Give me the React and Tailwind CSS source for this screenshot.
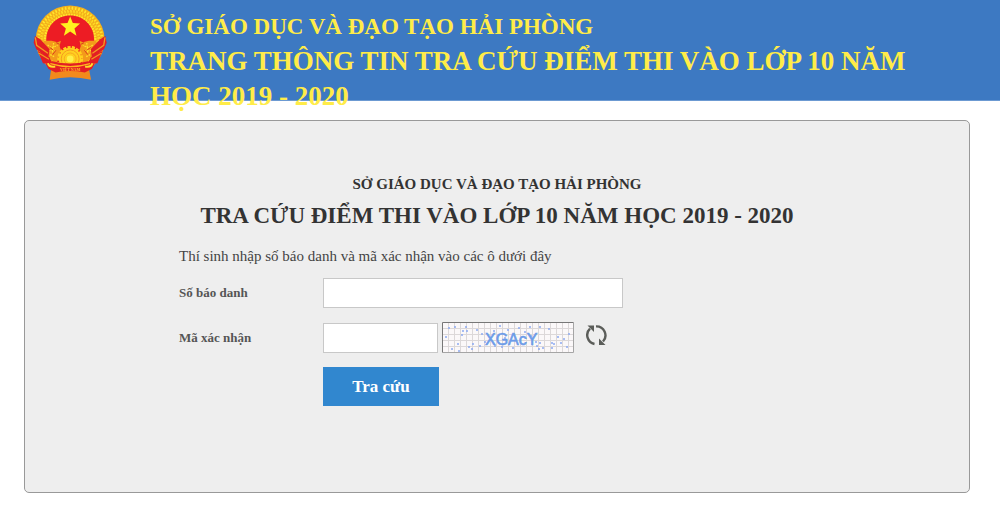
import { useState } from 'react';

const GRAIN_ANGLES = Array.from({ length: 43 }, (_, i) => -126 + i * 6);

const DOTS = [
  [4, 15], [10, 27], [13, 5], [16, 22], [21, 9], [24, 5], [25, 9], [20, 13], [27, 25],
  [31, 22], [30, 27], [38, 24], [40, 12], [43, 20], [52, 9], [58, 4], [60, 25],
  [66, 8], [71, 26], [77, 6], [83, 10], [88, 5], [89, 14], [94, 20], [98, 5], [97, 27],
  [101, 26], [95, 24], [98, 21], [107, 7], [110, 21], [112, 22], [116, 15], [119, 21],
  [122, 17], [127, 12], [125, 25], [110, 26], [63, 16], [35, 8], [7, 6], [17, 29], [53, 24],
];

const Emblem = () => (
  <svg viewBox="40 12 226 231" className="h-[77px] w-[75px]" aria-label="Quốc huy Việt Nam">
    {/* Wreath */}
    <circle cx="152" cy="120" r="104" fill="#f5b01c" />
    {GRAIN_ANGLES.map((angle) => (
      <g key={angle} transform={`rotate(${angle} 152 120)`}>
        <ellipse cx="149" cy="24" rx="3" ry="5" fill="#ffe52b" />
        <ellipse cx="154" cy="34" rx="3" ry="5" fill="#ffdb24" />
        <ellipse cx="149" cy="44" rx="3" ry="4" fill="#ffe52b" />
        <path d="M152 20v7M150 30l4 9" stroke="#e39a16" strokeWidth="1" />
      </g>
    ))}
    <path d="M152 46c-40 0-72 31-72 73 0 38 32 80 72 80s72-42 72-80c0-42-32-73-72-73z" fill="#ed1c24" />

    {/* Lower rice sheaves */}
    <path d="M74 122l22 0 18 5 10-5-4 16 4 12-6 22-14 30-28-12-16-28z" fill="#f39a1b" />
    <path d="M230 122l-22 0-18 5-10-5 4 16-4 12 6 22 14 30 28-12 16-28z" fill="#f39a1b" />
    <path
      d="M84 135l12 9 18-8M88 151l18 2M92 164l14 7M102 129l-3 29M84 172l14 12M220 135l-12 9-18-8M216 151l-18 2M212 164l-14 7M202 129l3 29M220 172l-14 12"
      fill="none"
      stroke="#ffe12a"
      strokeWidth="4"
      strokeDasharray="5 3"
    />
    <path d="M90 142l11 8M99 164l10-13M214 142l-11 8M205 164l-10-13M110 128l10 5M194 128l-10 5" stroke="#d8401c" strokeWidth="3" />

    {/* Side ribbons */}
    <path d="M46 108l16 10 28 30-4 26-36-26-8-20z" fill="#e31e24" />
    <path d="M258 108l-16 10-28 30 4 26 36-26 8-20z" fill="#e31e24" />
    <path d="M47 112l4 24 34 24M257 112l-4 24-34 24" fill="none" stroke="#f29a20" strokeWidth="4" />
    <path d="M54 152l36 20 10 22-30-4z" fill="#e31e24" />
    <path d="M250 152l-36 20-10 22 30-4z" fill="#e31e24" />
    <path d="M58 160l30 18M246 160l-30 18" stroke="#f29a20" strokeWidth="4" />

    {/* Cogwheel */}
    <circle cx="152" cy="177" r="35" fill="none" stroke="#ffcf1c" strokeWidth="8" strokeDasharray="9 4" />
    <circle cx="152" cy="177" r="34" fill="#ffd020" />
    <circle cx="152" cy="177" r="27" fill="none" stroke="#f49a1e" strokeWidth="3" />
    <circle cx="152" cy="177" r="18" fill="none" stroke="#f8a91e" strokeWidth="3" />
    <circle cx="152" cy="177" r="10" fill="#fff04a" />

    {/* Name ribbon */}
    <path d="M90 240l6-42h111l8 42q-63-16-125 0z" fill="#f28a1c" />
    <path d="M78 192l20-8q54 14 108 0l20 8-9 15-21 11q-44-9-88 0l-21-11z" fill="#e31e24" />
    <path d="M92 191q60 18 120 0" fill="none" stroke="#ffb51e" strokeWidth="4" />
    <path d="M85 190q3 13 22 10M219 190q-3 13-22 10" fill="none" stroke="#ffdd2a" strokeWidth="6" />
    <text x="152" y="213" textAnchor="middle" fontSize="12" fontWeight="700" fill="#ffc81e">
      VIỆT NAM
    </text>

    {/* Star */}
    <path d="M152 49l8 20 22 1-17 15 6 22-19-13-19 13 6-22-17-15 22-1z" fill="#fff01f" />
  </svg>
);

const CaptchaImage = () => (
  <svg viewBox="0 0 132 31" className="h-[31px] w-[132px]" aria-label="XGAcY">
    <rect width="132" height="31" fill="#fbf8f9" />
    <path
      d="M6.5 0v31M12.500 0v31M18.500 0v31M24.500 0v31M30.500 0v31M36.500 0v31M42.500 0v31M48.500 0v31M54.500 0v31M60.500 0v31M66.500 0v31M72.500 0v31M78.500 0v31M84.500 0v31M90.500 0v31M96.500 0v31M102.500 0v31M108.500 0v31M114.500 0v31M120.500 0v31M126.500 0v31M0 6.500h132M0 12.500h132M0 18.500h132M0 24.500h132"
      stroke="#dcd8d9"
    />
    {DOTS.map(([x, y]) => (
      <circle key={`${x}-${y}`} cx={x} cy={y} r="1" fill="#8caaf0" />
    ))}
    <text
      x="43"
      y="23"
      fontFamily="'Liberation Sans', sans-serif"
      fontSize="16"
      fill="#6c9be8"
      stroke="#6c9be8"
      strokeWidth="0.6"
    >
      XGAcY
    </text>
    <path d="M0.500 31V0.500H132" fill="none" stroke="#777777" />
    <path d="M0 30.500h131.500V0" fill="none" stroke="#a5a5a5" />
  </svg>
);

const RefreshIcon = () => (
  <svg viewBox="0 0 21 21" className="h-[21px] w-[21px]" fill="none" stroke="#5b5d59" strokeWidth="2.4">
    <path d="M8.500 19A9 9 0 0 1 4 3.700" />
    <path d="M10 1.400A9 9 0 0 1 17 16.500" />
    <path d="M1.500 0.500h6.500v6.500z" fill="#5b5d59" stroke="none" />
    <path d="M19.500 20h-6.500v-6.500z" fill="#5b5d59" stroke="none" />
  </svg>
);

const Field = ({ id, label, children }) => (
  <div className="flex items-center">
    <label htmlFor={id} className="w-36 shrink-0 text-[13px] font-bold text-[#555555]">
      {label}
    </label>
    {children}
  </div>
);

const App = () => {
  const [formData, setFormData] = useState({ candidate: '', code: '' });

  const handleChange = (e) => {
    const { name, value } = e.target;
    setFormData((prev) => ({ ...prev, [name]: value }));
  };

  const inputClass = 'border border-[#c8c8c8] bg-white px-2 text-sm outline-none';

  return (
    <div className="min-h-screen bg-white font-['Liberation_Serif',serif]">
      {/* Header */}
      <header className="flex h-[101px] items-start border-b border-[#6c9ad2] bg-[#3d79c2] pl-[33px]">
        <div className="w-[117px] shrink-0 pt-1">
          <Emblem />
        </div>
        <div className="pt-[9px] pr-16 font-bold text-[#ffec48]">
          <p className="text-[23px] leading-[35px]">SỞ GIÁO DỤC VÀ ĐẠO TẠO HẢI PHÒNG</p>
          <h1 className="text-[27px] leading-[35px]">
            TRANG THÔNG TIN TRA CỨU ĐIỂM THI VÀO LỚP 10 NĂM HỌC 2019 - 2020
          </h1>
        </div>
      </header>

      {/* Lookup panel */}
      <main className="mt-[19px] mr-[30px] mb-3 ml-6 rounded-[5px] border border-[#999999] bg-[#eeeeee] pt-[51px] pb-[86px]">
        <div className="mx-auto max-w-[636px]">
          <div className="text-center font-bold text-[#333333]">
            <p className="text-[15px] leading-6">SỞ GIÁO DỤC VÀ ĐẠO TẠO HẢI PHÒNG</p>
            <h2 className="mt-1 text-[23px] leading-8">TRA CỨU ĐIỂM THI VÀO LỚP 10 NĂM HỌC 2019 - 2020</h2>
          </div>

          <p className="mt-3 text-[15px] leading-6 text-[#444444]">
            Thí sinh nhập số báo danh và mã xác nhận vào các ô dưới đây
          </p>

          <form className="mt-2.5 flex flex-col gap-3.5" onSubmit={(e) => e.preventDefault()}>
            <Field id="candidate" label="Số báo danh">
              <input
                id="candidate"
                name="candidate"
                value={formData.candidate}
                onChange={handleChange}
                className={`${inputClass} h-[30px] w-[300px]`}
              />
            </Field>

            <Field id="code" label="Mã xác nhận">
              <input
                id="code"
                name="code"
                value={formData.code}
                onChange={handleChange}
                className={`${inputClass} h-[30px] w-[115px]`}
              />
              <div className="ml-1">
                <CaptchaImage />
              </div>
              <button type="button" className="ml-3 pb-1" aria-label="Đổi mã xác nhận">
                <RefreshIcon />
              </button>
            </Field>

            <button type="submit" className="ml-36 h-[39px] w-[116px] bg-[#3187cf] text-[17px] font-bold text-white">
              Tra cứu
            </button>
          </form>
        </div>
      </main>
    </div>
  );
};

export default App;
